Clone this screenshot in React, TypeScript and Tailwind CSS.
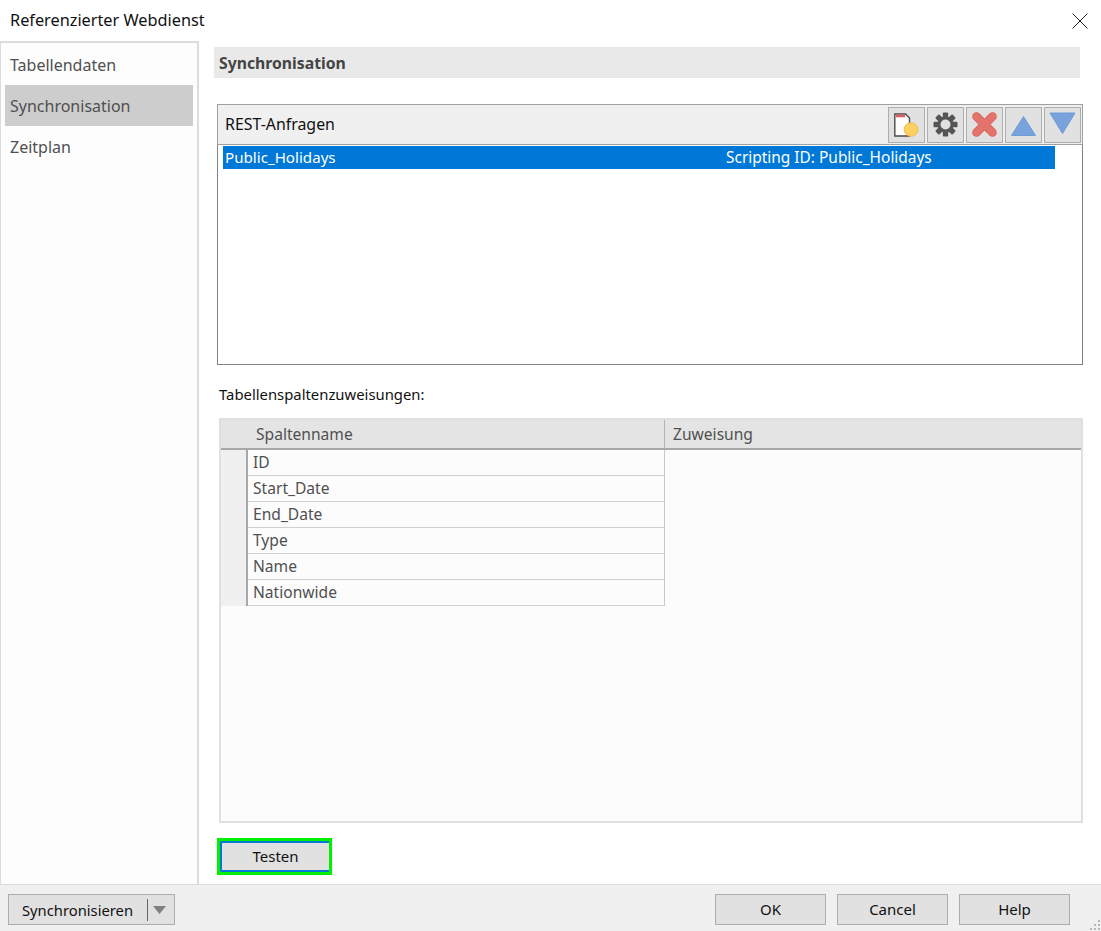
const FONT = "font-['Noto_Sans',sans-serif]";

const navItems = ["Tabellendaten", "Synchronisation", "Zeitplan"];
const columns = ["ID", "Start_Date", "End_Date", "Type", "Name", "Nationwide"];

function NewIcon() {
  return (
    <svg width="27" height="27" viewBox="0 0 27 27">
      <path d="M1.800 3H12.500L16.500 7V25H1.800Z" fill="#fdfdfd" stroke="#4a4a4a" strokeWidth="1.400" />
      <rect x="3" y="3.500" width="9" height="2.800" fill="#d9606a" />
      <circle cx="18" cy="18.500" r="6.800" fill="#fcd062" stroke="#f2bc48" />
    </svg>
  );
}

function GearIcon() {
  return (
    <svg width="27" height="27" viewBox="0 0 27 27">
      <g fill="#555555">
        <rect x="10.800" y="1.500" width="5.400" height="24" rx="1" />
        <rect x="1.500" y="10.800" width="24" height="5.400" rx="1" />
        <rect x="10.800" y="1.500" width="5.400" height="24" rx="1" transform="rotate(45 13.500 13.500)" />
        <rect x="10.800" y="1.500" width="5.400" height="24" rx="1" transform="rotate(-45 13.500 13.500)" />
      </g>
      <circle cx="13.500" cy="13.500" r="8" fill="#555555" />
      <circle cx="13.500" cy="13.500" r="5" fill="#e1e1e1" />
    </svg>
  );
}

function DeleteIcon() {
  return (
    <svg width="27" height="27" viewBox="0 0 27 27">
      <path d="M5.500 5.500L21.500 21.500M21.500 5.500L5.500 21.500" stroke="#d85c54" strokeWidth="8.500" strokeLinecap="round" />
      <path d="M5.500 5.500L21.500 21.500M21.500 5.500L5.500 21.500" stroke="#e4736b" strokeWidth="7" strokeLinecap="round" />
    </svg>
  );
}

function UpIcon() {
  return (
    <svg width="27" height="27" viewBox="0 0 27 27">
      <path d="M13.500 5.500L25.500 24.500H1.500Z" fill="#77a2dc" stroke="#6f9ad6" strokeLinejoin="round" />
    </svg>
  );
}

function DownIcon() {
  return (
    <svg width="27" height="27" viewBox="0 0 27 27">
      <path d="M1 2H26L13.500 22.500Z" fill="#77a2dc" stroke="#6f9ad6" strokeLinejoin="round" />
    </svg>
  );
}

function ToolButton({ children }: { children: React.ReactNode }) {
  return (
    <button className="w-[37px] h-[36px] flex items-center justify-center bg-[#e1e1e1] border border-[#adadad]">
      {children}
    </button>
  );
}

function FooterButton({ label }: { label: string }) {
  return (
    <button className="w-[111px] h-[31px] bg-[#e1e1e1] border border-[#adadad] text-[15px] text-[#111]">
      {label}
    </button>
  );
}

export default function App() {
  return (
    <div className={`${FONT} relative w-[1101px] h-[931px] flex flex-col bg-white overflow-hidden`}>
      {/* Title bar */}
      <div className="h-[41px] shrink-0 flex items-center justify-between pl-[10px] pr-[13px]">
        <span className="text-[16.300px] text-[#111]">Referenzierter Webdienst</span>
        <svg width="16" height="16" viewBox="0 0 16 16">
          <path d="M0.500 0.500L15.500 15.500M15.500 0.500L0.500 15.500" stroke="#222" strokeWidth="1" />
        </svg>
      </div>

      <div className="flex-1 flex min-h-0">
        {/* Side nav */}
        <div className="w-[199px] shrink-0 border-t-2 border-l border-r-2 border-[#dcdcdc] bg-[#fdfdfd] pt-[1px] pl-[4px] pr-[4px]">
          {navItems.map((item) => (
            <div
              key={item}
              className={`h-[41px] flex items-center pl-[5px] text-[16px] text-[#505050] ${
                item === "Synchronisation" ? "bg-[#cdcdcd]" : ""
              }`}
            >
              {item}
            </div>
          ))}
        </div>

        {/* Content */}
        <div className="flex-1 flex flex-col pt-[6px] pl-[15px]">
          <div className="w-[866px] h-[31px] flex items-center pl-[5px] pt-[2px] bg-[#e9e9e9] text-[15.750px] font-bold text-[#444]">
            Synchronisation
          </div>

          {/* REST requests */}
          <div className="mt-[26px] ml-[3px] w-[866px] h-[261px] flex flex-col">
            <div className="h-[41px] shrink-0 flex items-center justify-between pl-[7px] pr-[1px] bg-[#f0f0f0] border border-[#a0a0a0]">
              <span className="text-[15.900px] text-[#111]">REST-Anfragen</span>
              <div className="flex gap-[2px]">
                <ToolButton><NewIcon /></ToolButton>
                <ToolButton><GearIcon /></ToolButton>
                <ToolButton><DeleteIcon /></ToolButton>
                <ToolButton><UpIcon /></ToolButton>
                <ToolButton><DownIcon /></ToolButton>
              </div>
            </div>
            <div className="flex-1 border border-t-0 border-[#82828a] bg-white pt-[1px] pl-[5px] pr-[27px]">
              <div className="h-[23px] flex items-center pl-[2px] bg-[#0078d7] text-white">
                <span className="w-[501px] text-[15.150px]">Public_Holidays</span>
                <span className="text-[15.450px]">Scripting ID: Public_Holidays</span>
              </div>
            </div>
          </div>

          <div className="mt-[19px] ml-[5px] h-[20px] flex items-center text-[14.850px] text-[#111]">
            Tabellenspaltenzuweisungen:
          </div>

          {/* Column mapping table */}
          <div className="mt-[14px] ml-[5px] w-[864px] h-[405px] border-2 border-[#e0e0e0] bg-[#fcfcfc] text-[15.600px] text-[#505050]">
            <div className="h-[30px] flex bg-[#e4e4e4] border-b-2 border-[#a8a8a8]">
              <div className="w-[444px] pl-[35px] pt-[1px] flex items-center border-r border-[#b4b4b4]">Spaltenname</div>
              <div className="flex-1 pl-[8px] pt-[1px] flex items-center">Zuweisung</div>
            </div>
            <div className="flex w-[444px]">
              <div className="w-[25px] bg-[#f0f0f0]" />
              <div className="flex-1 border-l-2 border-[#a8a8a8] border-r border-r-[#c8c8c8]">
                {columns.map((col) => (
                  <div key={col} className="h-[26px] flex items-center pl-[5px] border-b border-[#d0d0d0]">
                    {col}
                  </div>
                ))}
              </div>
            </div>
          </div>

          <div className="mt-[15px] ml-[3px] w-[115px] h-[37px] border-[3px] border-[#00f000]">
            <button className="w-full h-full bg-[#e1e1e1] border-2 border-r-0 border-[#0078d7] text-[15px] text-[#111]">
              Testen
            </button>
          </div>
        </div>
      </div>

      {/* Footer */}
      <div className="h-[47px] shrink-0 flex items-start justify-between pt-[9px] pl-[8px] pr-[31px] bg-[#f0f0f0] border-t border-[#dcdcdc]">
        <div className="w-[167px] h-[31px] flex items-center bg-[#e1e1e1] border border-[#adadad] text-[14.750px] text-[#111]">
          <span className="w-[139px] pl-[13px] border-r border-[#666] leading-[22px]">Synchronisieren</span>
          <svg width="13" height="8" viewBox="0 0 13 8" className="ml-[5px]">
            <path d="M0 0H13L6.500 8Z" fill="#808080" />
          </svg>
        </div>
        <div className="flex gap-[11px]">
          <FooterButton label="OK" />
          <FooterButton label="Cancel" />
          <FooterButton label="Help" />
        </div>
      </div>

      {/* Resize grip */}
      <svg width="11" height="11" viewBox="0 0 11 11" className="absolute right-0 bottom-0">
        <g fill="#b8b8b8">
          <rect x="8" y="0" width="2" height="2" />
          <rect x="4" y="4" width="2" height="2" />
          <rect x="8" y="4" width="2" height="2" />
          <rect x="0" y="8" width="2" height="2" />
          <rect x="4" y="8" width="2" height="2" />
          <rect x="8" y="8" width="2" height="2" />
        </g>
      </svg>
    </div>
  );
}
